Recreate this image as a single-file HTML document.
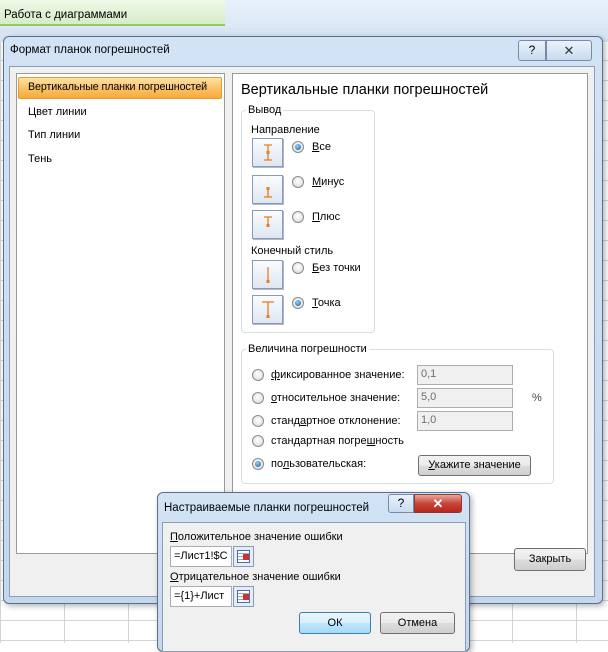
<!DOCTYPE html><html><head><meta charset="utf-8"><style>
*{box-sizing:border-box;margin:0;padding:0}
body{width:608px;height:643px;position:relative;overflow:hidden;font-family:"Liberation Sans",sans-serif;font-size:11px;color:#000;background:#fff}
.a{position:absolute}
.grid{background-image:linear-gradient(#d4d4d4 1px,transparent 1px),linear-gradient(90deg,#d4d4d4 1px,transparent 1px);background-size:64px 20px}
.btn{position:absolute;border:1px solid #707070;border-radius:3px;background:linear-gradient(#f2f2f2,#ebebeb 50%,#dddddd 51%,#cfcfcf);text-align:center}
.ib{position:absolute;width:31px;height:29px;border:1px solid #8a9bb5;background:linear-gradient(#fafcff,#dde6f2);box-shadow:1px 1px 0 #b0b8c8}
.rad{position:absolute;width:12px;height:12px;border-radius:50%;border:1px solid #8a8a8a;background:radial-gradient(circle at 50% 40%,#fff,#d8d8d8)}
.rad.on::after{content:"";position:absolute;left:2px;top:2px;width:6px;height:6px;border-radius:50%;background:radial-gradient(circle at 40% 35%,#8fd3ff,#0a5a9c)}
.inp{position:absolute;border:1px solid #abadb3;background:#f0f0f0;color:#6d6d6d;padding:2px 3px;height:20px}
.grp{position:absolute;border:1px solid #d5dfe5;border-radius:4px}
.gl{position:absolute;background:#fff;padding:0 2px}
</style></head><body>
<div class="a grid" style="left:0;top:0;width:608px;height:643px"></div>
<div class="a" style="left:0;top:0;width:608px;height:28px;background:linear-gradient(#e8f1fb,#dbe8f6)"></div>
<div class="a" style="left:0;top:0;width:225px;height:26px;background:linear-gradient(#f0f8e8,#d8ecc8);border-bottom:2px solid #8ccf60"></div>
<div class="a" style="left:4px;top:9px;font-size:11.5px">Работа с диаграммами</div>
<div class="a" style="left:0;top:28px;width:608px;height:14px;background:#d6e4f4"></div>
<div class="a" style="left:3px;top:36px;width:600px;height:568px;border:1px solid #5c6f8a;border-radius:6px;background:linear-gradient(#d2e3f5,#c3d7ee);box-shadow:2px 2px 6px rgba(0,0,0,.3)"></div>
<div class="a" style="left:10px;top:44px;font-size:11.5px">Формат планок погрешностей</div>
<div class="btn" style="left:518px;top:40px;width:28px;height:21px;border-color:#7a8aa6;border-radius:3px 0 0 3px;background:linear-gradient(#eaf2fb,#c9dbef);font-size:12px;line-height:19px">?</div>
<div class="btn" style="left:546px;top:40px;width:46px;height:21px;border-color:#7a8aa6;border-radius:0 3px 3px 0;background:linear-gradient(#eaf2fb,#c9dbef);font-size:13px;line-height:19px;color:#333">✕</div>
<div class="a" style="left:9px;top:66px;width:586px;height:531px;background:#f0f0f0;border:1px solid #8c9cb4"></div>
<div class="a" style="left:16px;top:73px;width:209px;height:481px;background:#fff;border:1px solid #9a9a9a"></div>
<div class="a" style="left:18px;top:77px;width:204px;height:22px;background:linear-gradient(#fde2a8,#fbc36a 50%,#f9a93a);border:1px solid #e79b2a;border-radius:2px"></div>
<div class="a" style="left:28px;top:81px;font-size:10.7px;letter-spacing:-0.1px">Вертикальные планки погрешностей</div>
<div class="a" style="left:28px;top:106px">Цвет линии</div>
<div class="a" style="left:28px;top:129px">Тип линии</div>
<div class="a" style="left:28px;top:153px">Тень</div>
<div class="a" style="left:232px;top:73px;width:356px;height:481px;background:#fff;border:1px solid #9a9a9a"></div>
<div class="a" style="left:241px;top:82px;font-size:14.5px">Вертикальные планки погрешностей</div>
<div class="grp" style="left:241px;top:110px;width:134px;height:223px"></div>
<div class="gl" style="left:246px;top:104px">Вывод</div>
<div class="a" style="left:251px;top:124px">Направление</div>
<div class="ib" style="left:252px;top:138px"><svg width="29" height="27"><path d="M11 6h8M15 6v15M11 21h8" stroke="#e67e1a" stroke-width="1.3" fill="none"/><rect x="13.5" y="12" width="3" height="3" fill="#e67e1a"/></svg></div>
<div class="ib" style="left:252px;top:175px"><svg width="29" height="27"><path d="M15 12v9M11 21h8" stroke="#e67e1a" stroke-width="1.3" fill="none"/><rect x="13.5" y="11" width="3" height="3" fill="#e67e1a"/></svg></div>
<div class="ib" style="left:252px;top:210px"><svg width="29" height="27"><path d="M11 6h8M15 6v8" stroke="#e67e1a" stroke-width="1.3" fill="none"/><rect x="13.5" y="13" width="3" height="3" fill="#e67e1a"/></svg></div>
<div class="a" style="left:251px;top:245px">Конечный стиль</div>
<div class="ib" style="left:252px;top:260px"><svg width="29" height="27"><path d="M15 6v15" stroke="#e67e1a" stroke-width="1.3" fill="none"/><rect x="13.5" y="19" width="3" height="3" fill="#e67e1a"/></svg></div>
<div class="ib" style="left:252px;top:295px"><svg width="29" height="27"><path d="M9 6h12M15 6v15" stroke="#e67e1a" stroke-width="1.3" fill="none"/><rect x="13.5" y="19" width="3" height="3" fill="#e67e1a"/></svg></div>
<div class="rad on" style="left:292px;top:141px"></div><div class="a" style="left:312px;top:141px"><u>В</u>се</div>
<div class="rad" style="left:292px;top:176px"></div><div class="a" style="left:312px;top:176px"><u>М</u>инус</div>
<div class="rad" style="left:292px;top:211px"></div><div class="a" style="left:312px;top:211px"><u>П</u>люс</div>
<div class="rad" style="left:292px;top:262px"></div><div class="a" style="left:312px;top:262px"><u>Б</u>ез точки</div>
<div class="rad on" style="left:292px;top:297px"></div><div class="a" style="left:312px;top:297px"><u>Т</u>очка</div>
<div class="grp" style="left:241px;top:349px;width:313px;height:135px"></div>
<div class="gl" style="left:246px;top:343px">Величина погрешности</div>
<div class="rad" style="left:252px;top:369px"></div><div class="a" style="left:271px;top:369px"><u>ф</u>иксированное значение:</div>
<div class="rad" style="left:252px;top:392px"></div><div class="a" style="left:271px;top:392px"><u>о</u>тносительное значение:</div>
<div class="rad" style="left:252px;top:415px"></div><div class="a" style="left:271px;top:415px">станд<u>а</u>ртное отклонение:</div>
<div class="rad" style="left:252px;top:435px"></div><div class="a" style="left:271px;top:435px">стандартная погре<u>ш</u>ность</div>
<div class="rad on" style="left:252px;top:458px"></div><div class="a" style="left:271px;top:458px">по<u>л</u>ьзовательская:</div>
<div class="inp" style="left:417px;top:365px;width:96px">0,1</div>
<div class="inp" style="left:417px;top:388px;width:96px">5,0</div>
<div class="inp" style="left:417px;top:411px;width:96px">1,0</div>
<div class="a" style="left:532px;top:392px;color:#444">%</div>
<div class="btn" style="left:418px;top:455px;width:113px;height:21px;line-height:19px"><u>У</u>кажите значение</div>
<div class="btn" style="left:514px;top:548px;width:72px;height:23px;line-height:21px">Закрыть</div>
<div class="a" style="left:157px;top:492px;width:313px;height:160px;border:1px solid #5c6f8a;border-radius:6px;background:linear-gradient(#d2e3f5,#c3d7ee);box-shadow:2px 2px 6px rgba(0,0,0,.3)"></div>
<div class="a" style="left:164px;top:502px;font-size:11.5px">Настраиваемые планки погрешностей</div>
<div class="btn" style="left:388px;top:494px;width:26px;height:19px;border-color:#7a8aa6;border-radius:3px 0 0 3px;background:linear-gradient(#eaf2fb,#c9dbef);font-size:12px;line-height:17px">?</div>
<div class="btn" style="left:414px;top:494px;width:48px;height:19px;border-color:#8a3a30;border-radius:0 3px 3px 0;background:linear-gradient(#e8a89c,#c8443a 50%,#b8281c);color:#fff;font-size:13px;line-height:17px;font-weight:bold">✕</div>
<div class="a" style="left:162px;top:522px;width:304px;height:130px;background:#f0f0f0;border:1px solid #8c9cb4"></div>
<div class="a" style="left:170px;top:531px"><u>П</u>оложительное значение ошибки</div>
<div class="a" style="left:170px;top:546px;width:62px;height:21px;background:#fff;border:1px solid #abadb3;padding:3px 3px">=Лист1!$C</div>
<div class="a" style="left:233px;top:546px;width:21px;height:21px;border:1px solid #8a9bb5;background:#e4ecf6"><div style="margin:3px;width:13px;height:13px;border:1px solid #4a6ea8;background:repeating-linear-gradient(#fff 0 2px,#9ab 2px 3px)"><div style="margin:3px 0 0 5px;width:6px;height:6px;background:#d03030"></div></div></div>
<div class="a" style="left:170px;top:571px"><u>О</u>трицательное значение ошибки</div>
<div class="a" style="left:170px;top:586px;width:62px;height:21px;background:#fff;border:1px solid #abadb3;padding:3px 3px">={1}+Лист</div>
<div class="a" style="left:233px;top:586px;width:21px;height:21px;border:1px solid #8a9bb5;background:#e4ecf6"><div style="margin:3px;width:13px;height:13px;border:1px solid #4a6ea8;background:repeating-linear-gradient(#fff 0 2px,#9ab 2px 3px)"><div style="margin:3px 0 0 5px;width:6px;height:6px;background:#d03030"></div></div></div>
<div class="btn" style="left:299px;top:612px;width:72px;height:22px;line-height:20px;border-color:#3c7fb1;background:linear-gradient(#eaf6fd,#d9f0fc 50%,#bee6fd 51%,#a7d9f5)">ОК</div>
<div class="btn" style="left:380px;top:612px;width:75px;height:22px;line-height:20px">Отмена</div>
</body></html>
